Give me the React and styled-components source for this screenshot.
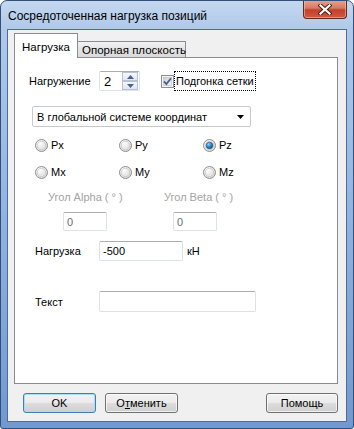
import React from "react";
import styled, { createGlobalStyle } from "styled-components";

const GlobalStyle = createGlobalStyle`
  html, body {
    margin: 0;
    padding: 0;
    background: #ffffff;
  }
  body {
    font-family: "Liberation Sans", Arial, sans-serif;
    font-size: 11px;
    color: #000;
  }
`;

const RadioIcon = ({ checked }) => (
  <svg width="13" height="13" viewBox="0 0 13 13">
    <defs>
      <radialGradient id="rbg" cx="0.35" cy="0.3" r="0.8">
        <stop offset="0" stopColor="#ffffff" />
        <stop offset="1" stopColor="#d4d4d4" />
      </radialGradient>
      <radialGradient id="rdot" cx="0.35" cy="0.3" r="0.8">
        <stop offset="0" stopColor="#8fd4ff" />
        <stop offset="0.5" stopColor="#2a8ad0" />
        <stop offset="1" stopColor="#0c4676" />
      </radialGradient>
    </defs>
    <circle cx="6.5" cy="6.5" r="6" fill="url(#rbg)" stroke="#8e8f8f" />
    <circle cx="6.5" cy="6.5" r="4.2" fill="none" stroke="#c8c8c8" strokeWidth="0.8" />
    {checked && <circle cx="6.5" cy="6.5" r="3.3" fill="url(#rdot)" stroke="#1f4a73" strokeWidth="0.6" />}
  </svg>
);

const CheckIcon = () => (
  <svg width="13" height="13" viewBox="0 0 13 13">
    <defs>
      <linearGradient id="cbg" x1="0" y1="0" x2="1" y2="1">
        <stop offset="0" stopColor="#cbcfd5" />
        <stop offset="1" stopColor="#f6f6f6" />
      </linearGradient>
    </defs>
    <rect x="0.5" y="0.5" width="12" height="12" fill="#f4f4f4" stroke="#8e8f8f" />
    <rect x="2.5" y="2.5" width="8" height="8" fill="url(#cbg)" stroke="#b9bcc2" strokeWidth="0.6" />
    <path d="M3 6.4 L5.4 9 L10 3.3" fill="none" stroke="#4a5f97" strokeWidth="1.8" />
  </svg>
);

const Window = styled.div`
  box-sizing: border-box;
  width: 354px;
  height: 429px;
  border: 1px solid #34507a;
  border-radius: 7px 7px 3px 3px;
  background: linear-gradient(
    to bottom,
    #c4d7ef 0px,
    #b0c9ea 28px,
    #8fb0df 55%,
    #7199d0 100%
  );
  display: flex;
  flex-direction: column;
  overflow: hidden;
`;

const TitleBar = styled.div`
  height: 28px;
  display: flex;
  align-items: flex-start;
  justify-content: space-between;
  padding-left: 7px;
`;

const Title = styled.div`
  font-size: 12px;
  line-height: 15px;
  margin-top: 8px;
  color: #000;
`;

const CloseButton = styled.div`
  box-sizing: border-box;
  width: 44px;
  height: 19px;
  margin-top: -1px;
  margin-right: 6px;
  border: 1px solid #5f2a22;
  border-top: none;
  border-radius: 0 0 4px 4px;
  background: linear-gradient(
    to bottom,
    #e8a493 0%,
    #d47b67 45%,
    #c2412a 55%,
    #d4583e 100%
  );
  box-shadow: inset 0 0 0 1px rgba(255, 200, 190, 0.5);
  display: flex;
  align-items: center;
  justify-content: center;
`;

const Client = styled.div`
  flex: 1;
  margin: 0 6px 6px;
  border: 1px solid #506c96;
  background: #f0f0f0;
  display: flex;
  flex-direction: column;
  padding: 3px 8px 0 6px;
`;

const Tabs = styled.div`
  display: flex;
  align-items: flex-end;
  height: 24px;
`;

const Tab = styled.div`
  box-sizing: border-box;
  position: relative;
  border: 1px solid #898c95;
  border-bottom: none;
  padding-left: ${(p) => (p.$active ? "7px" : "4px")};
  padding-top: ${(p) => (p.$active ? "2px" : "0")};
  width: ${(p) => p.$w}px;
  height: ${(p) => (p.$active ? "25px" : "16px")};
  margin-bottom: ${(p) => (p.$active ? "-1px" : "0")};
  margin-left: ${(p) => (p.$active ? "0" : "-1px")};
  z-index: ${(p) => (p.$active ? 2 : 1)};
  background: ${(p) =>
    p.$active ? "#ffffff" : "linear-gradient(to bottom, #f2f2f2, #e3e3e3 50%, #d9d9d9)"};
  line-height: ${(p) => (p.$active ? "22px" : "16px")};
  font-size: 11.5px;
  white-space: nowrap;
`;

const Panel = styled.div`
  box-sizing: border-box;
  height: 327px;
  border: 1px solid #898c95;
  background: #ffffff;
  display: flex;
  flex-direction: column;
  padding-top: 13px;
`;

const Row = styled.div`
  display: flex;
  align-items: center;
  margin-left: ${(p) => p.$left || 0}px;
  margin-top: ${(p) => p.$top || 0}px;
  height: ${(p) => p.$h || 20}px;
`;

const Label = styled.span`
  width: ${(p) => (p.$w ? `${p.$w}px` : "auto")};
  flex-shrink: 0;
  color: ${(p) => (p.$disabled ? "#a3a3a3" : "#000")};
  white-space: nowrap;
`;

const TextBox = styled.div`
  box-sizing: border-box;
  width: ${(p) => p.$w}px;
  height: ${(p) => p.$h || 20}px;
  border: 1px solid #dde2e8;
  border-top-color: #abadb3;
  border-radius: 2px;
  background: #fff;
  padding-left: 3px;
  display: flex;
  align-items: center;
  color: ${(p) => (p.$disabled ? "#6d6d6d" : "#000")};
  font-size: ${(p) => (p.$big ? "13px" : "11px")};
`;

const Spin = styled(TextBox)`
  padding-left: 4px;
  justify-content: space-between;
  padding-right: 1px;
`;

const SpinButtons = styled.div`
  display: flex;
  flex-direction: column;
  width: 16px;
  height: 18px;
`;

const SpinHalf = styled.div`
  flex: 1;
  box-sizing: border-box;
  border: 1px solid #b7c3d3;
  background: linear-gradient(to bottom, #f6f8fb, #e0e7f0);
  display: flex;
  align-items: center;
  justify-content: center;
`;

const Check = styled.div`
  display: flex;
  align-items: center;
  margin-left: 21px;
  gap: 1px;
`;

const FocusLabel = styled.span`
  outline: 1px dotted #000;
  outline-offset: 0;
  padding: 1px 1px;
  line-height: 16px;
`;

const Combo = styled.div`
  box-sizing: border-box;
  width: 219px;
  height: 21px;
  border: 1px solid #c6c9ce;
  border-radius: 2px;
  background: #fff;
  display: flex;
  align-items: center;
  justify-content: space-between;
  padding: 0 6px 0 4px;
`;

const RadioGrid = styled.div`
  display: grid;
  grid-template-columns: repeat(3, 84px);
  margin-left: 20px;
  margin-top: ${(p) => p.$top}px;
  height: 16px;
  align-items: center;
`;

const Radio = styled.label`
  display: flex;
  align-items: center;
  gap: 3px;
`;

const Pair = styled.div`
  display: grid;
  grid-template-columns: ${(p) => p.$col}px auto;
  margin-left: ${(p) => p.$left}px;
  margin-top: ${(p) => p.$top}px;
  height: ${(p) => p.$h}px;
  align-items: center;
`;

const Footer = styled.div`
  display: flex;
  align-items: center;
  margin-top: 9px;
  padding-left: 9px;
  gap: 9px;
`;

const Spacer = styled.div`
  flex: 1;
`;

const Button = styled.div`
  box-sizing: border-box;
  width: ${(p) => p.$w || 73}px;
  height: 20px;
  border: 1px solid ${(p) => (p.$default ? "#3c7fb1" : "#707070")};
  border-radius: 3px;
  background: linear-gradient(
    to bottom,
    #f2f2f2 0%,
    #ebebeb 50%,
    #dddddd 51%,
    #cfcfcf 100%
  );
  box-shadow: inset 0 0 0 1px
    ${(p) => (p.$default ? "#a6e0f7" : "rgba(255, 255, 255, 0.7)")};
  display: flex;
  align-items: center;
  justify-content: center;
  font-size: 11px;
  u {
    text-decoration: underline;
  }
`;

export default function App() {
  return (
    <>
      <GlobalStyle />
      <Window>
        <TitleBar>
          <Title>Сосредоточенная нагрузка позиций</Title>
          <CloseButton>
            <svg width="14" height="11" viewBox="0 0 14 11">
              <path
                d="M2.5 1.5 L11.5 9.5 M11.5 1.5 L2.5 9.5"
                stroke="#4a1a12"
                strokeWidth="4"
                strokeLinecap="square"
              />
              <path
                d="M2.5 1.5 L11.5 9.5 M11.5 1.5 L2.5 9.5"
                stroke="#ffffff"
                strokeWidth="2.2"
                strokeLinecap="square"
              />
            </svg>
          </CloseButton>
        </TitleBar>
        <Client>
          <Tabs>
            <Tab $active $w={64}>Нагрузка</Tab>
            <Tab $w={109}>Опорная плоскость</Tab>
          </Tabs>
          <Panel>
            <Row $left={14}>
              <Label $w={70}>Нагружение</Label>
              <Spin $w={41} $big>
                2
                <SpinButtons>
                  <SpinHalf>
                    <svg width="7" height="4" viewBox="0 0 7 4">
                      <path d="M0 4 L3.5 0 L7 4 Z" fill="#4d6185" />
                    </svg>
                  </SpinHalf>
                  <SpinHalf>
                    <svg width="7" height="4" viewBox="0 0 7 4">
                      <path d="M0 0 L3.5 4 L7 0 Z" fill="#4d6185" />
                    </svg>
                  </SpinHalf>
                </SpinButtons>
              </Spin>
              <Check>
                <CheckIcon />
                <FocusLabel>Подгонка сетки</FocusLabel>
              </Check>
            </Row>
            <Row $left={17} $top={15} $h={21}>
              <Combo>
                В глобальной системе координат
                <svg width="7" height="4" viewBox="0 0 7 4">
                  <path d="M0 0 L7 0 L3.5 4 Z" fill="#000" />
                </svg>
              </Combo>
            </Row>
            <RadioGrid $top={10}>
              <Radio><RadioIcon />Px</Radio>
              <Radio><RadioIcon />Py</Radio>
              <Radio><RadioIcon checked />Pz</Radio>
            </RadioGrid>
            <RadioGrid $top={11}>
              <Radio><RadioIcon />Mx</Radio>
              <Radio><RadioIcon />My</Radio>
              <Radio><RadioIcon />Mz</Radio>
            </RadioGrid>
            <Pair $left={33} $col={116} $top={10} $h={14}>
              <Label $disabled>Угол Alpha ( ° )</Label>
              <Label $disabled>Угол Beta ( ° )</Label>
            </Pair>
            <Pair $left={48} $col={110} $top={8} $h={19}>
              <TextBox $w={44} $h={19} $disabled>0</TextBox>
              <TextBox $w={44} $h={19} $disabled>0</TextBox>
            </Pair>
            <Row $left={20} $top={10}>
              <Label $w={64}>Нагрузка</Label>
              <TextBox $w={84}>-500</TextBox>
              <Label style={{ marginLeft: 4 }}>кН</Label>
            </Row>
            <Row $left={20} $top={30} $h={21}>
              <Label $w={64}>Текст</Label>
              <TextBox $w={157} $h={21} />
            </Row>
          </Panel>
          <Footer>
            <Button $default>OK</Button>
            <Button>
              <span>
                О<u>т</u>менить
              </span>
            </Button>
            <Spacer />
            <Button $w={72}>Помощь</Button>
          </Footer>
        </Client>
      </Window>
    </>
  );
}
